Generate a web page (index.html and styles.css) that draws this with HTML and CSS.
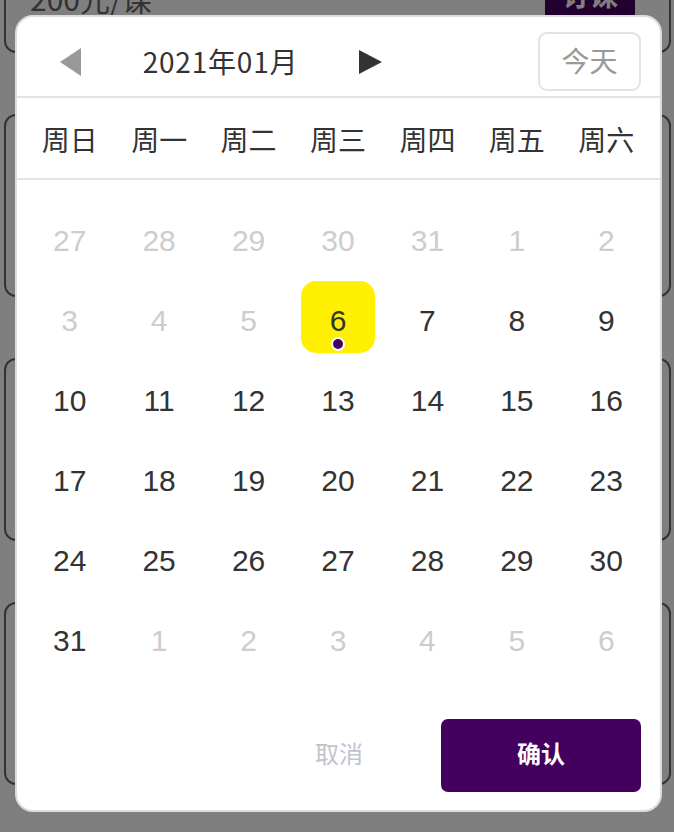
FILE: index.html
```html
<!DOCTYPE html>
<html lang="zh">
<head>
<meta charset="utf-8">
<title>日历选择</title>
<link rel="stylesheet" href="styles.css">
</head>
<body>
<div class="list">
  <div class="card">
    <div class="card-foot"><span class="price">200元/课</span><span class="book">订课</span></div>
  </div>
  <div class="card"></div>
  <div class="card"></div>
  <div class="card"></div>
</div>

<div class="overlay">
  <div class="modal">
    <div class="head">
      <span class="arrow arrow-left"></span>
      <span class="title">2021年01月</span>
      <span class="arrow arrow-right"></span>
      <span class="today">今天</span>
    </div>
    <div class="week">
      <span>周日</span><span>周一</span><span>周二</span><span>周三</span><span>周四</span><span>周五</span><span>周六</span>
    </div>
    <div class="days">
      <div class="cell"><div class="day muted">27</div></div>
      <div class="cell"><div class="day muted">28</div></div>
      <div class="cell"><div class="day muted">29</div></div>
      <div class="cell"><div class="day muted">30</div></div>
      <div class="cell"><div class="day muted">31</div></div>
      <div class="cell"><div class="day muted">1</div></div>
      <div class="cell"><div class="day muted">2</div></div>

      <div class="cell"><div class="day muted">3</div></div>
      <div class="cell"><div class="day muted">4</div></div>
      <div class="cell"><div class="day muted">5</div></div>
      <div class="cell"><div class="day selected"><span>6</span><i class="dot"></i></div></div>
      <div class="cell"><div class="day">7</div></div>
      <div class="cell"><div class="day">8</div></div>
      <div class="cell"><div class="day">9</div></div>

      <div class="cell"><div class="day">10</div></div>
      <div class="cell"><div class="day">11</div></div>
      <div class="cell"><div class="day">12</div></div>
      <div class="cell"><div class="day">13</div></div>
      <div class="cell"><div class="day">14</div></div>
      <div class="cell"><div class="day">15</div></div>
      <div class="cell"><div class="day">16</div></div>

      <div class="cell"><div class="day">17</div></div>
      <div class="cell"><div class="day">18</div></div>
      <div class="cell"><div class="day">19</div></div>
      <div class="cell"><div class="day">20</div></div>
      <div class="cell"><div class="day">21</div></div>
      <div class="cell"><div class="day">22</div></div>
      <div class="cell"><div class="day">23</div></div>

      <div class="cell"><div class="day">24</div></div>
      <div class="cell"><div class="day">25</div></div>
      <div class="cell"><div class="day">26</div></div>
      <div class="cell"><div class="day">27</div></div>
      <div class="cell"><div class="day">28</div></div>
      <div class="cell"><div class="day">29</div></div>
      <div class="cell"><div class="day">30</div></div>

      <div class="cell"><div class="day">31</div></div>
      <div class="cell"><div class="day muted">1</div></div>
      <div class="cell"><div class="day muted">2</div></div>
      <div class="cell"><div class="day muted">3</div></div>
      <div class="cell"><div class="day muted">4</div></div>
      <div class="cell"><div class="day muted">5</div></div>
      <div class="cell"><div class="day muted">6</div></div>
    </div>
    <div class="foot">
      <span class="btn cancel">取消</span>
      <span class="btn confirm">确认</span>
    </div>
  </div>
</div>
</body>
</html>
```

FILE: styles.css
```css
* { box-sizing: border-box; }

html, body {
  margin: 0;
  padding: 0;
  width: 674px;
  height: 832px;
  overflow: hidden;
  background: #fff;
  font-family: "Liberation Sans", "Noto Sans CJK SC", sans-serif;
  color: #333;
}

/* background list */
.list {
  display: flex;
  flex-direction: column;
  gap: 61px;
  margin-top: -130px;
  padding: 0 3px 0 4px;
}

.card {
  height: 183px;
  border: 2px solid #666;
  border-radius: 12px;
  display: flex;
  flex-direction: column;
  justify-content: flex-end;
}

.card-foot {
  display: flex;
  justify-content: space-between;
  align-items: flex-end;
  padding: 0 34px 34px 24px;
}

.price {
  font-size: 30px;
  line-height: 30px;
  color: #666;
  font-family: "Noto Sans CJK SC", sans-serif;
  margin-bottom: 4px;
}

.book {
  width: 90px;
  height: 46px;
  background: #45005f;
  color: #fff;
  font-size: 28px;
  font-weight: bold;
  font-family: "Noto Sans CJK SC", sans-serif;
  display: flex;
  align-items: center;
  justify-content: center;
}

/* overlay + modal */
.overlay {
  position: fixed;
  inset: 0;
  background: rgba(0, 0, 0, 0.5);
  display: flex;
  align-items: flex-start;
  padding: 15px 12px 0 15px;
}

.modal {
  width: 647px;
  height: 797px;
  background: #fff;
  border: 2px solid #dcdcdc;
  border-radius: 18px;
  display: flex;
  flex-direction: column;
}

.head {
  height: 81px;
  border-bottom: 2px solid #e3e3e3;
  display: flex;
  align-items: center;
  padding: 14px 19px 4px 43px;
}

.arrow {
  width: 0;
  height: 0;
  border-top: 14px solid transparent;
  border-bottom: 14px solid transparent;
}

.arrow-left {
  border-right: 21px solid #999;
}

.arrow-right {
  border-left: 23px solid #333;
  border-top-width: 12px;
  border-bottom-width: 12px;
}

.title {
  font-family: "Noto Sans CJK SC", sans-serif;
  font-size: 28px;
  line-height: 40px;
  color: #333;
  margin: 0 60px 0 61px;
  width: 157px;
  text-align: center;
  letter-spacing: 0.8px;
  padding-bottom: 2px;
}

.today {
  margin-left: auto;
  width: 103px;
  height: 59px;
  border: 2px solid #e2e2e2;
  border-radius: 9px;
  color: #999;
  font-family: "Noto Sans CJK SC", sans-serif;
  font-size: 28px;
  display: flex;
  align-items: center;
  justify-content: center;
  padding-bottom: 3px;
}

.week {
  height: 82px;
  border-bottom: 2px solid #e3e3e3;
  display: grid;
  grid-template-columns: repeat(7, 1fr);
  align-items: center;
  padding: 2px 9px 0 8px;
  font-family: "Noto Sans CJK SC", sans-serif;
  font-size: 28px;
  color: #333;
  text-align: center;
}

.days {
  display: grid;
  grid-template-columns: repeat(7, 1fr);
  grid-auto-rows: 80px;
  padding: 21px 9px 0 8px;
}

.cell {
  display: flex;
  justify-content: center;
}

.day {
  width: 74px;
  height: 72px;
  border-radius: 15px;
  display: flex;
  flex-direction: column;
  align-items: center;
  padding-top: 25px;
  font-size: 30px;
  line-height: 30px;
  color: #333;
}

.day.muted {
  color: #cdcdcd;
}

.day.selected {
  background: #ffef00;
}

.dot {
  display: block;
  width: 14px;
  height: 14px;
  margin-top: 1px;
  border-radius: 50%;
  background: #45005f;
  border: 2px solid #fff;
}

.foot {
  display: flex;
  justify-content: flex-end;
  gap: 2px;
  padding: 38px 19px 0 0;
}

.btn {
  width: 200px;
  height: 73px;
  display: flex;
  align-items: center;
  justify-content: center;
  font-family: "Noto Sans CJK SC", sans-serif;
  font-size: 24px;
  padding-bottom: 7px;
}

.cancel {
  color: #bfc4cc;
}

.confirm {
  background: #43005f;
  color: #fff;
  border-radius: 7px;
  font-weight: bold;
}
```
